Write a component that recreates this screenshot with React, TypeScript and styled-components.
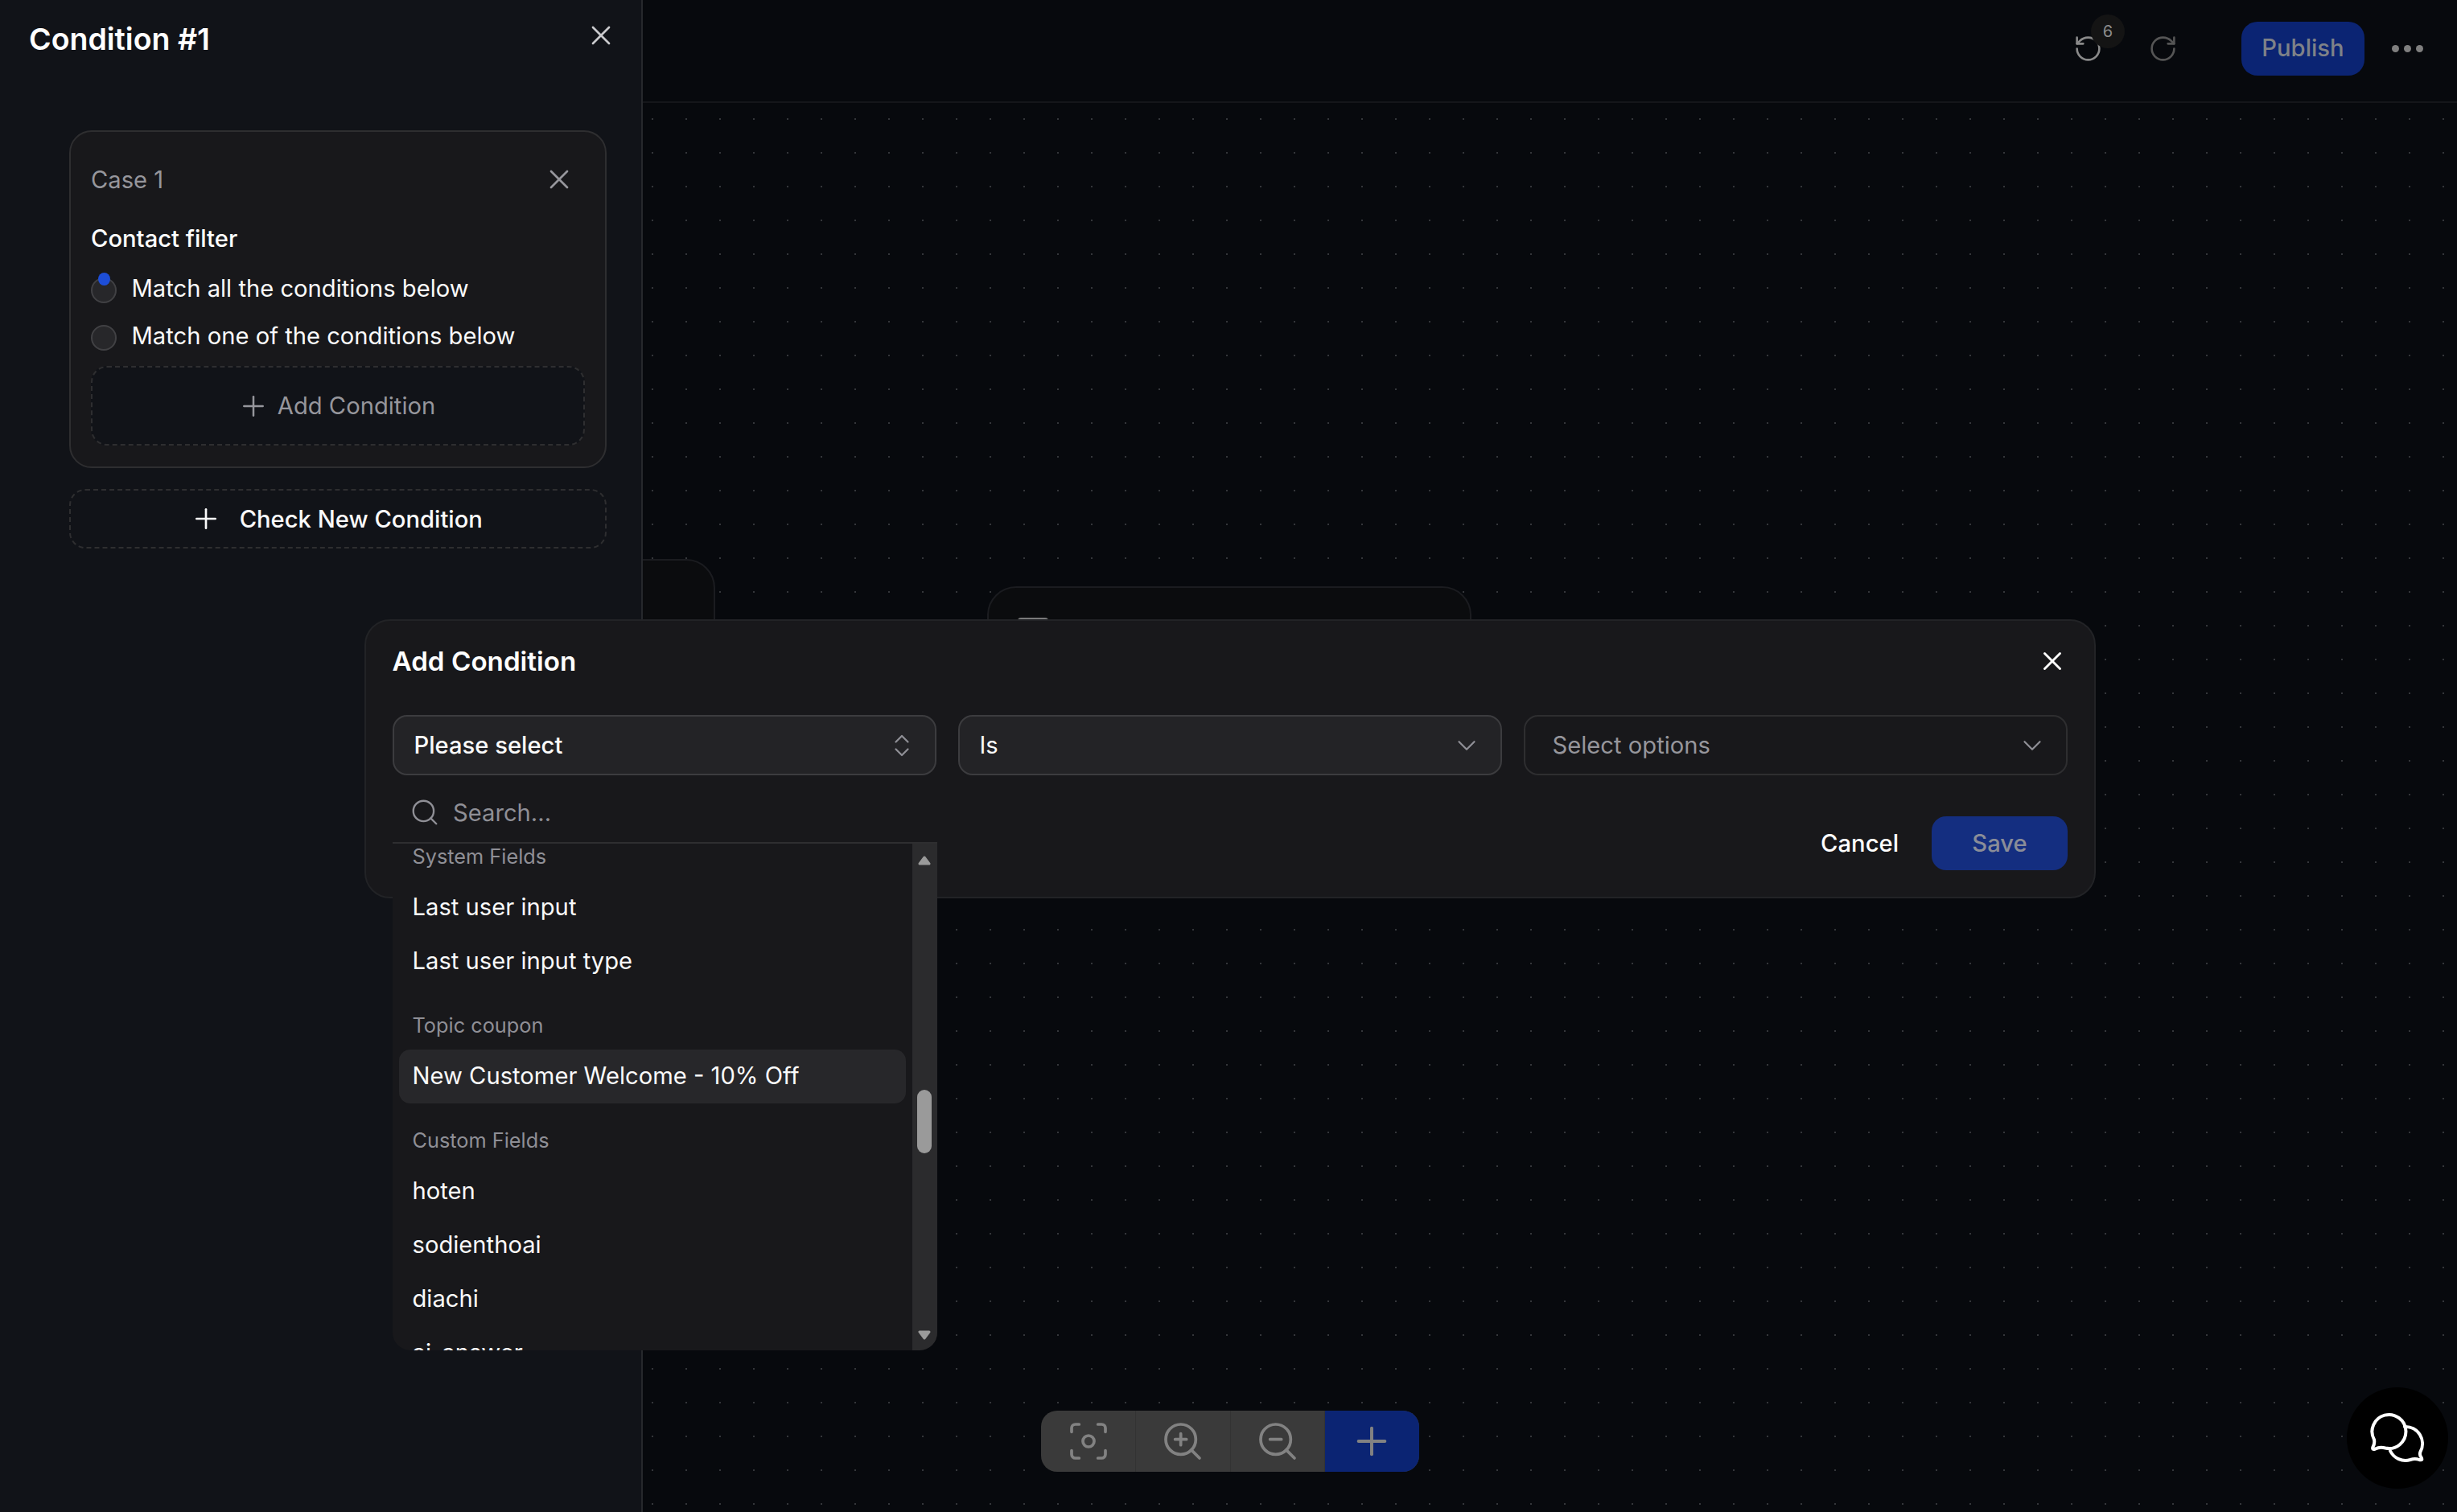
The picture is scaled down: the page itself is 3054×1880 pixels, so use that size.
import React from "react";
import styled, { createGlobalStyle } from "styled-components";
import {
  ChevronDown,
  ChevronsUpDown,
  Focus,
  Plus,
  RotateCcw,
  RotateCw,
  Search,
  X,
  ZoomIn,
  ZoomOut,
} from "lucide-react";

const GlobalStyle = createGlobalStyle`
  html, body {
    margin: 0;
    padding: 0;
    background: #07090d;
  }
  * {
    box-sizing: border-box;
  }
  body {
    font-family: Inter, "Liberation Sans", sans-serif;
    font-size: 29.2px;
    color: #fafafa;
  }
`;

const Page = styled.div`
  position: relative;
  display: flex;
  width: 3054px;
  height: 1880px;
  overflow: hidden;
  background: #07090d;
`;

const Sidebar = styled.aside`
  flex: 0 0 799px;
  height: 100%;
  padding: 25px 30px 0 36px;
  background: #111318;
  border-right: 2px solid #26282c;
`;

const SideHead = styled.div`
  display: flex;
  align-items: flex-start;
  justify-content: space-between;
  height: 48px;
  margin-bottom: 89px;

  & > span {
    margin-top: -1px;
  }
`;

const SideTitle = styled.h1`
  margin: 0;
  font-size: 37.5px;
  line-height: 48px;
  font-weight: 600;
  color: #ffffff;
`;

const IconButton = styled.span<{ $color?: string }>`
  display: inline-flex;
  align-items: center;
  justify-content: center;
  color: ${(p) => p.$color || "#c9c9cc"};
`;

const SideBody = styled.div`
  margin: 0 13px 0 49.5px;
`;

const CaseCard = styled.section`
  padding: 39px 25px 26px 25.5px;
  background: #18181b;
  border: 2px solid #2e2e30;
  border-radius: 28px;
`;

const CaseHead = styled.div`
  display: flex;
  align-items: center;
  justify-content: space-between;
  height: 40px;
  padding-right: 12px;
  color: #96969c;
`;

const FilterLabel = styled.div`
  margin: 37px 0 31px;
  line-height: 34px;
  font-weight: 500;
  color: #ffffff;
`;

const RadioList = styled.div`
  display: flex;
  flex-direction: column;
  gap: 27px;
  margin-bottom: 19px;
`;

const RadioRow = styled.label`
  display: flex;
  align-items: center;
  gap: 18.5px;
  height: 32px;
  line-height: 32px;
`;

const RadioText = styled.span`
  margin-top: -4px;
  color: #fafafa;
`;

const Radio = styled.span<{ $checked?: boolean }>`
  position: relative;
  flex: 0 0 32px;
  height: 32px;
  border-radius: 50%;
  background: #27272a;
  border: 2px solid #414144;

  &::after {
    content: "";
    display: ${(p) => (p.$checked ? "block" : "none")};
    position: absolute;
    left: 7px;
    top: -8px;
    width: 15px;
    height: 16px;
    border-radius: 50%;
    background: #1d4ed8;
  }
`;

const DashedButton = styled.button<{ $muted?: boolean; $height: number; $gap: number }>`
  display: flex;
  align-items: center;
  justify-content: center;
  gap: ${(p) => p.$gap}px;
  width: 100%;
  height: ${(p) => p.$height}px;
  padding: 0 4px 0 0;
  background: #111318;
  border: 2px dashed #2e2e30;
  border-radius: 20px;
  font: inherit;
  font-weight: ${(p) => (p.$muted ? 400 : 500)};
  color: ${(p) => (p.$muted ? "#96969c" : "#fafafa")};
`;

const CheckWrap = styled.div`
  margin-top: 26px;
`;

const Main = styled.main`
  flex: 1;
  display: flex;
  flex-direction: column;
  min-width: 0;
`;

const TopBar = styled.header`
  flex: 0 0 128px;
  display: flex;
  align-items: center;
  justify-content: flex-end;
  padding: 0 42px 5px 0;
  background: #07090d;
  border-bottom: 2px solid #15161a;
`;

const HistoryButton = styled.span<{ $color: string; $mr: number }>`
  position: relative;
  display: inline-flex;
  margin-right: ${(p) => p.$mr}px;
  color: ${(p) => p.$color};
`;

const CountBadge = styled.span`
  position: absolute;
  left: 22px;
  top: -24px;
  display: flex;
  align-items: center;
  justify-content: center;
  width: 42px;
  height: 42px;
  border-radius: 50%;
  background: #141414;
  color: #8c8c8c;
  font-size: 20px;
`;

const PublishButton = styled.button`
  width: 153px;
  height: 67px;
  margin-right: 34px;
  padding: 0 0 2px;
  border: 0;
  border-radius: 20px;
  background: #0b2473;
  color: #7f8288;
  font: inherit;
  font-weight: 500;
`;

const MoreDots = styled.span`
  display: flex;
  gap: 6px;

  i {
    width: 9px;
    height: 9px;
    border-radius: 50%;
    background: #7f7f7f;
  }
`;

const Canvas = styled.div`
  position: relative;
  flex: 1;
  overflow: hidden;
  background-color: #07090d;
  background-image: radial-gradient(circle, #34363a 1.2px, transparent 1.4px);
  background-size: 42px 42px;
  background-position: -9px -1px;
`;

const FlowNode = styled.div<{ $left: number; $top: number; $width: number }>`
  position: absolute;
  left: ${(p) => p.$left}px;
  top: ${(p) => p.$top}px;
  width: ${(p) => p.$width}px;
  height: 340px;
  background: #0b0c0e;
  border: 2px solid #1b1c20;
  border-radius: 36px;
`;

const NodeIcon = styled.span`
  position: absolute;
  left: 36px;
  top: 37px;
  width: 38px;
  height: 40px;
  border-radius: 4px;
  background: #7a7a7a;
`;

const Toolbar = styled.div`
  position: absolute;
  left: 495px;
  bottom: 50px;
  display: flex;
  height: 76px;
  border-radius: 20px;
  overflow: hidden;
  background: #3a3a3a;
`;

const ToolButton = styled.span<{ $primary?: boolean }>`
  display: flex;
  align-items: center;
  justify-content: center;
  width: ${(p) => (p.$primary ? 118 : 117.3)}px;
  color: #828282;
  background: ${(p) => (p.$primary ? "#0b2473" : "transparent")};
  & + & {
    border-left: 1px solid #333333;
  }
`;

const ChatBubble = styled.div`
  position: absolute;
  right: 11px;
  bottom: 29px;
  display: flex;
  align-items: center;
  justify-content: center;
  width: 126px;
  height: 126px;
  border-radius: 50%;
  background: #000000;
  color: #ffffff;
`;

const Dialog = styled.div`
  position: absolute;
  left: 453px;
  top: 770px;
  width: 2152px;
  height: 347px;
  padding: 32px 33px 33px 32.5px;
  background: #18181b;
  border: 2px solid #222326;
  border-radius: 32px;
`;

const DialogHead = styled.div`
  display: flex;
  align-items: center;
  justify-content: space-between;
  height: 36px;
  margin-bottom: 49px;
`;

const DialogTitle = styled.h2`
  margin: 0;
  font-size: 33.2px;
  line-height: 36px;
  font-weight: 600;
  color: #ffffff;
`;

const FieldRow = styled.div`
  display: flex;
  gap: 27px;
  margin-bottom: 51px;
`;

const FieldSlot = styled.div`
  position: relative;
  flex: 0 0 676px;
`;

const SelectBox = styled.div<{ $filled?: boolean }>`
  display: flex;
  align-items: center;
  justify-content: space-between;
  height: 75px;
  padding: 0 23px 0 ${(p) => (p.$filled ? 25 : 34)}px;
  background: ${(p) => (p.$filled ? "#232326" : "#18181b")};
  border: 2px solid ${(p) => (p.$filled ? "#3c3c3f" : "#2e2e30")};
  border-radius: 18px;
`;

const SelectValue = styled.span<{ $placeholder?: boolean; $strong?: boolean }>`
  font-weight: ${(p) => (p.$strong ? 500 : 400)};
  color: ${(p) => (p.$placeholder ? "#96969c" : "#fafafa")};
`;

const SelectIcon = styled.span`
  display: inline-flex;
  color: #8f8f96;
`;

const DropPanel = styled.div`
  position: absolute;
  left: 0;
  top: 75px;
  z-index: 3;
  display: flex;
  flex-direction: column;
  width: 677px;
  height: 715px;
  background: #18181b;
  border-radius: 0 0 22px 22px;
  overflow: hidden;
`;

const SearchRow = styled.div`
  flex: 0 0 85px;
  display: flex;
  align-items: center;
  gap: 16px;
  padding: 9px 0 0 21.5px;
  color: #8f8f96;
  border-bottom: 2px solid #2e2e30;
`;

const ListArea = styled.div`
  flex: 1;
  display: flex;
  min-height: 0;
`;

const ListClip = styled.div`
  flex: 1;
  overflow: hidden;
  padding: 0 8px;
`;

const ListInner = styled.div`
  margin-top: -14px;
`;

const GroupLabel = styled.div<{ $first?: boolean }>`
  height: 60px;
  margin-top: ${(p) => (p.$first ? 0 : 16)}px;
  padding-left: 17px;
  line-height: 60px;
  font-size: 25.3px;
  color: #8f8f96;
`;

const OptionItem = styled.div<{ $active?: boolean }>`
  height: 67px;
  padding-left: 17px;
  line-height: 66px;
  border-radius: 14px;
  color: #fafafa;
  background: ${(p) => (p.$active ? "#27272a" : "transparent")};
`;

const ScrollTrack = styled.div`
  flex: 0 0 31px;
  display: flex;
  flex-direction: column;
  align-items: center;
  padding: 15px 0 13px;
  background: #2b2b2d;
`;

const ScrollThumb = styled.div`
  width: 18px;
  height: 79px;
  margin-top: 279px;
  margin-bottom: auto;
  border-radius: 9px;
  background: #9a9a9a;
`;

const DialogFooter = styled.div`
  display: flex;
  align-items: center;
  justify-content: flex-end;
  gap: 41px;
  height: 67px;
`;

const CancelButton = styled.button`
  padding: 0;
  border: 0;
  background: none;
  color: #ffffff;
  font: inherit;
  font-weight: 500;
`;

const SaveButton = styled.button`
  width: 169px;
  height: 67px;
  padding: 0;
  border: 0;
  border-radius: 18px;
  background: #142e80;
  color: #8a8d98;
  font: inherit;
  font-weight: 500;
`;

const ChatIcon = () => (
  <svg width="68" height="64" viewBox="-1 -1 68 64" fill="none" stroke="currentColor" strokeWidth="4" strokeLinecap="round" strokeLinejoin="round">
    <path d="M4 33A21 21 0 1 1 18 43.5Q11 41.5 5.5 44.5Q1 46 2.5 42Q5 38 4 33Z" />
    <path d="M42 17A21 21 0 0 1 61.5 48Q60 52 62.5 55Q65 59.5 60 58Q55 56 49 58A21 21 0 0 1 24 47" />
  </svg>
);

const ScrollArrow = ({ down }: { down?: boolean }) => (
  <svg width="16" height="12" viewBox="0 0 16 12">
    <polygon
      points={down ? "2,2 14,2 8,10" : "8,2 14,10 2,10"}
      fill="#9a9a9a"
      stroke="#9a9a9a"
      strokeWidth="3"
      strokeLinejoin="round"
    />
  </svg>
);

const App = () => {
  return (
    <Page>
      <GlobalStyle />
      <Sidebar>
        <SideHead>
          <SideTitle>Condition #1</SideTitle>
          <IconButton>
            <X size={40} strokeWidth={1.6} />
          </IconButton>
        </SideHead>
        <SideBody>
          <CaseCard>
            <CaseHead>
              <span>Case 1</span>
              <IconButton $color="#96969c">
                <X size={40} strokeWidth={1.6} />
              </IconButton>
            </CaseHead>
            <FilterLabel>Contact filter</FilterLabel>
            <RadioList>
              <RadioRow>
                <Radio $checked />
                <RadioText>Match all the conditions below</RadioText>
              </RadioRow>
              <RadioRow>
                <Radio />
                <RadioText>Match one of the conditions below</RadioText>
              </RadioRow>
            </RadioList>
            <DashedButton $muted $height={99} $gap={10}>
              <Plus size={40} strokeWidth={1.5} />
              Add Condition
            </DashedButton>
          </CaseCard>
          <CheckWrap>
            <DashedButton $height={74} $gap={22}>
              <Plus size={40} strokeWidth={1.6} />
              Check New Condition
            </DashedButton>
          </CheckWrap>
        </SideBody>
      </Sidebar>

      <Main>
        <TopBar>
          <HistoryButton $color="#8a8a8a" $mr={56}>
            <RotateCcw size={37} strokeWidth={1.7} />
            <CountBadge>6</CountBadge>
          </HistoryButton>
          <HistoryButton $color="#555555" $mr={79}>
            <RotateCw size={37} strokeWidth={1.7} />
          </HistoryButton>
          <PublishButton>Publish</PublishButton>
          <MoreDots>
            <i />
            <i />
            <i />
          </MoreDots>
        </TopBar>
        <Canvas>
          <FlowNode $left={-60} $top={567} $width={150} />
          <FlowNode $left={428} $top={601} $width={602}>
            <NodeIcon />
          </FlowNode>
          <Toolbar>
            <ToolButton>
              <Focus size={56} strokeWidth={1.6} />
            </ToolButton>
            <ToolButton>
              <ZoomIn size={56} strokeWidth={1.6} />
            </ToolButton>
            <ToolButton>
              <ZoomOut size={56} strokeWidth={1.6} />
            </ToolButton>
            <ToolButton $primary>
              <Plus size={56} strokeWidth={1.7} />
            </ToolButton>
          </Toolbar>
          <ChatBubble>
            <ChatIcon />
          </ChatBubble>
        </Canvas>
      </Main>

      <Dialog>
        <DialogHead>
          <DialogTitle>Add Condition</DialogTitle>
          <IconButton $color="#ffffff">
            <X size={38} strokeWidth={1.8} />
          </IconButton>
        </DialogHead>
        <FieldRow>
          <FieldSlot>
            <SelectBox $filled>
              <SelectValue $strong>Please select</SelectValue>
              <SelectIcon>
                <ChevronsUpDown size={36} strokeWidth={1.5} />
              </SelectIcon>
            </SelectBox>
            <DropPanel>
              <SearchRow>
                <Search size={38} strokeWidth={1.5} />
                <span>Search...</span>
              </SearchRow>
              <ListArea>
                <ListClip>
                  <ListInner>
                    <GroupLabel $first>System Fields</GroupLabel>
                    <OptionItem>Last user input</OptionItem>
                    <OptionItem>Last user input type</OptionItem>
                    <GroupLabel>Topic coupon</GroupLabel>
                    <OptionItem $active>New Customer Welcome - 10% Off</OptionItem>
                    <GroupLabel>Custom Fields</GroupLabel>
                    <OptionItem>hoten</OptionItem>
                    <OptionItem>sodienthoai</OptionItem>
                    <OptionItem>diachi</OptionItem>
                    <OptionItem>ai_answer</OptionItem>
                  </ListInner>
                </ListClip>
                <ScrollTrack>
                  <ScrollArrow />
                  <ScrollThumb />
                  <ScrollArrow down />
                </ScrollTrack>
              </ListArea>
            </DropPanel>
          </FieldSlot>
          <FieldSlot>
            <SelectBox $filled>
              <SelectValue>Is</SelectValue>
              <SelectIcon>
                <ChevronDown size={38} strokeWidth={1.4} />
              </SelectIcon>
            </SelectBox>
          </FieldSlot>
          <FieldSlot>
            <SelectBox>
              <SelectValue $placeholder>Select options</SelectValue>
              <SelectIcon>
                <ChevronDown size={38} strokeWidth={1.4} />
              </SelectIcon>
            </SelectBox>
          </FieldSlot>
        </FieldRow>
        <DialogFooter>
          <CancelButton>Cancel</CancelButton>
          <SaveButton>Save</SaveButton>
        </DialogFooter>
      </Dialog>
    </Page>
  );
};

export default App;
